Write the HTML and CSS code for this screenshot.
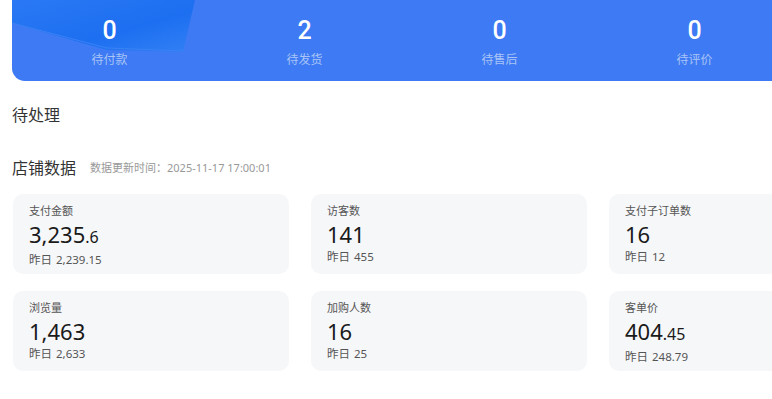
FILE: index.html
```html
<!DOCTYPE html>
<html lang="zh">
<head>
<meta charset="utf-8">
<link rel="stylesheet" href="styles.css">
</head>
<body>
<div class="page">
  <div class="banner">
    <svg class="deco" width="190" height="56" viewBox="0 0 190 56">
      <defs>
        <linearGradient id="g" x1="0" y1="0" x2="1" y2="1">
          <stop offset="0" stop-color="#2a78f4"/>
          <stop offset="0.6" stop-color="#1d6ff1"/>
          <stop offset="1" stop-color="#3380f5"/>
        </linearGradient>
      </defs>
      <polygon points="0,0 183,0 171,52 95,50 0,23" fill="url(#g)"/>
      <polyline points="0,23 95,48 171,51" fill="none" stroke="#3a82f4" stroke-width="1"/>
    </svg>
    <div class="stat"><div class="num">0</div><div class="lbl">待付款</div></div>
    <div class="stat"><div class="num">2</div><div class="lbl">待发货</div></div>
    <div class="stat"><div class="num">0</div><div class="lbl">待售后</div></div>
    <div class="stat"><div class="num">0</div><div class="lbl">待评价</div></div>
  </div>

  <div class="section-title todo">待处理</div>

  <div class="section-head">
    <span class="section-title">店铺数据</span>
    <span class="update">数据更新时间：2025-11-17 17:00:01</span>
  </div>

  <div class="cards">
    <div class="card">
      <div class="c-lbl">支付金额</div>
      <div class="c-val">3,235<span class="dec">.6</span></div>
      <div class="c-prev">昨日&nbsp;2,239.15</div>
    </div>
    <div class="card">
      <div class="c-lbl">访客数</div>
      <div class="c-val">141</div>
      <div class="c-prev">昨日&nbsp;455</div>
    </div>
    <div class="card">
      <div class="c-lbl">支付子订单数</div>
      <div class="c-val">16</div>
      <div class="c-prev">昨日&nbsp;12</div>
    </div>
    <div class="card">
      <div class="c-lbl">浏览量</div>
      <div class="c-val">1,463</div>
      <div class="c-prev">昨日&nbsp;2,633</div>
    </div>
    <div class="card">
      <div class="c-lbl">加购人数</div>
      <div class="c-val">16</div>
      <div class="c-prev">昨日&nbsp;25</div>
    </div>
    <div class="card">
      <div class="c-lbl">客单价</div>
      <div class="c-val">404<span class="dec">.45</span></div>
      <div class="c-prev">昨日&nbsp;248.79</div>
    </div>
  </div>
</div>
</body>
</html>
```

FILE: styles.css
```css
html, body {
  margin: 0;
  padding: 0;
  background: #ffffff;
  overflow: hidden;
}
body {
  font-family: "Noto Sans", "Noto Sans CJK SC", sans-serif;
  color: #333;
}
.page {
  padding-left: 12px;
  width: 800px;
}
.banner {
  position: relative;
  width: 780px;
  height: 81px;
  background: #3d7af3;
  border-radius: 0 0 0 13px;
  display: flex;
  overflow: hidden;
}
.deco {
  position: absolute;
  left: 0;
  top: 0;
}
.stat {
  position: relative;
  width: 195px;
  display: flex;
  flex-direction: column;
  align-items: center;
}
.num {
  font-family: Roboto, "Noto Sans", sans-serif;
  font-weight: 500;
  font-size: 25px;
  line-height: 30px;
  margin-top: 16px;
  color: #ffffff;
}
.lbl {
  font-family: "Noto Sans CJK SC", sans-serif;
  font-size: 12px;
  line-height: 16px;
  margin-top: 5px;
  color: #a9c4f7;
}
.section-title {
  font-family: "Noto Sans CJK SC", sans-serif;
  font-size: 16px;
  line-height: 24px;
  color: #333;
}
.todo {
  margin-top: 21px;
}
.section-head {
  margin-top: 29px;
  display: flex;
  align-items: center;
  gap: 14px;
}
.update {
  font-family: "Noto Sans", "Noto Sans CJK SC", sans-serif;
  font-size: 11px;
  color: #999;
}
.cards {
  margin-top: 15px;
  margin-left: 1px;
  display: grid;
  grid-template-columns: 276px 276px 276px;
  column-gap: 22px;
  row-gap: 17px;
}
.card {
  height: 80px;
  box-sizing: border-box;
  background: #f6f7f9;
  border-radius: 10px;
  padding: 9px 16px 0;
}
.c-lbl {
  font-family: "Noto Sans CJK SC", sans-serif;
  font-size: 11px;
  line-height: 15px;
  color: #555;
}
.c-val {
  font-family: "Noto Sans", sans-serif;
  font-size: 22px;
  line-height: 28px;
  margin-top: 2px;
  color: #1a1a1a;
}
.dec {
  font-size: 16px;
}
.c-prev {
  font-family: "Noto Sans", "Noto Sans CJK SC", sans-serif;
  font-size: 11.5px;
  line-height: 15px;
  margin-top: 1px;
  color: #555;
  word-spacing: 1px;
}
```
